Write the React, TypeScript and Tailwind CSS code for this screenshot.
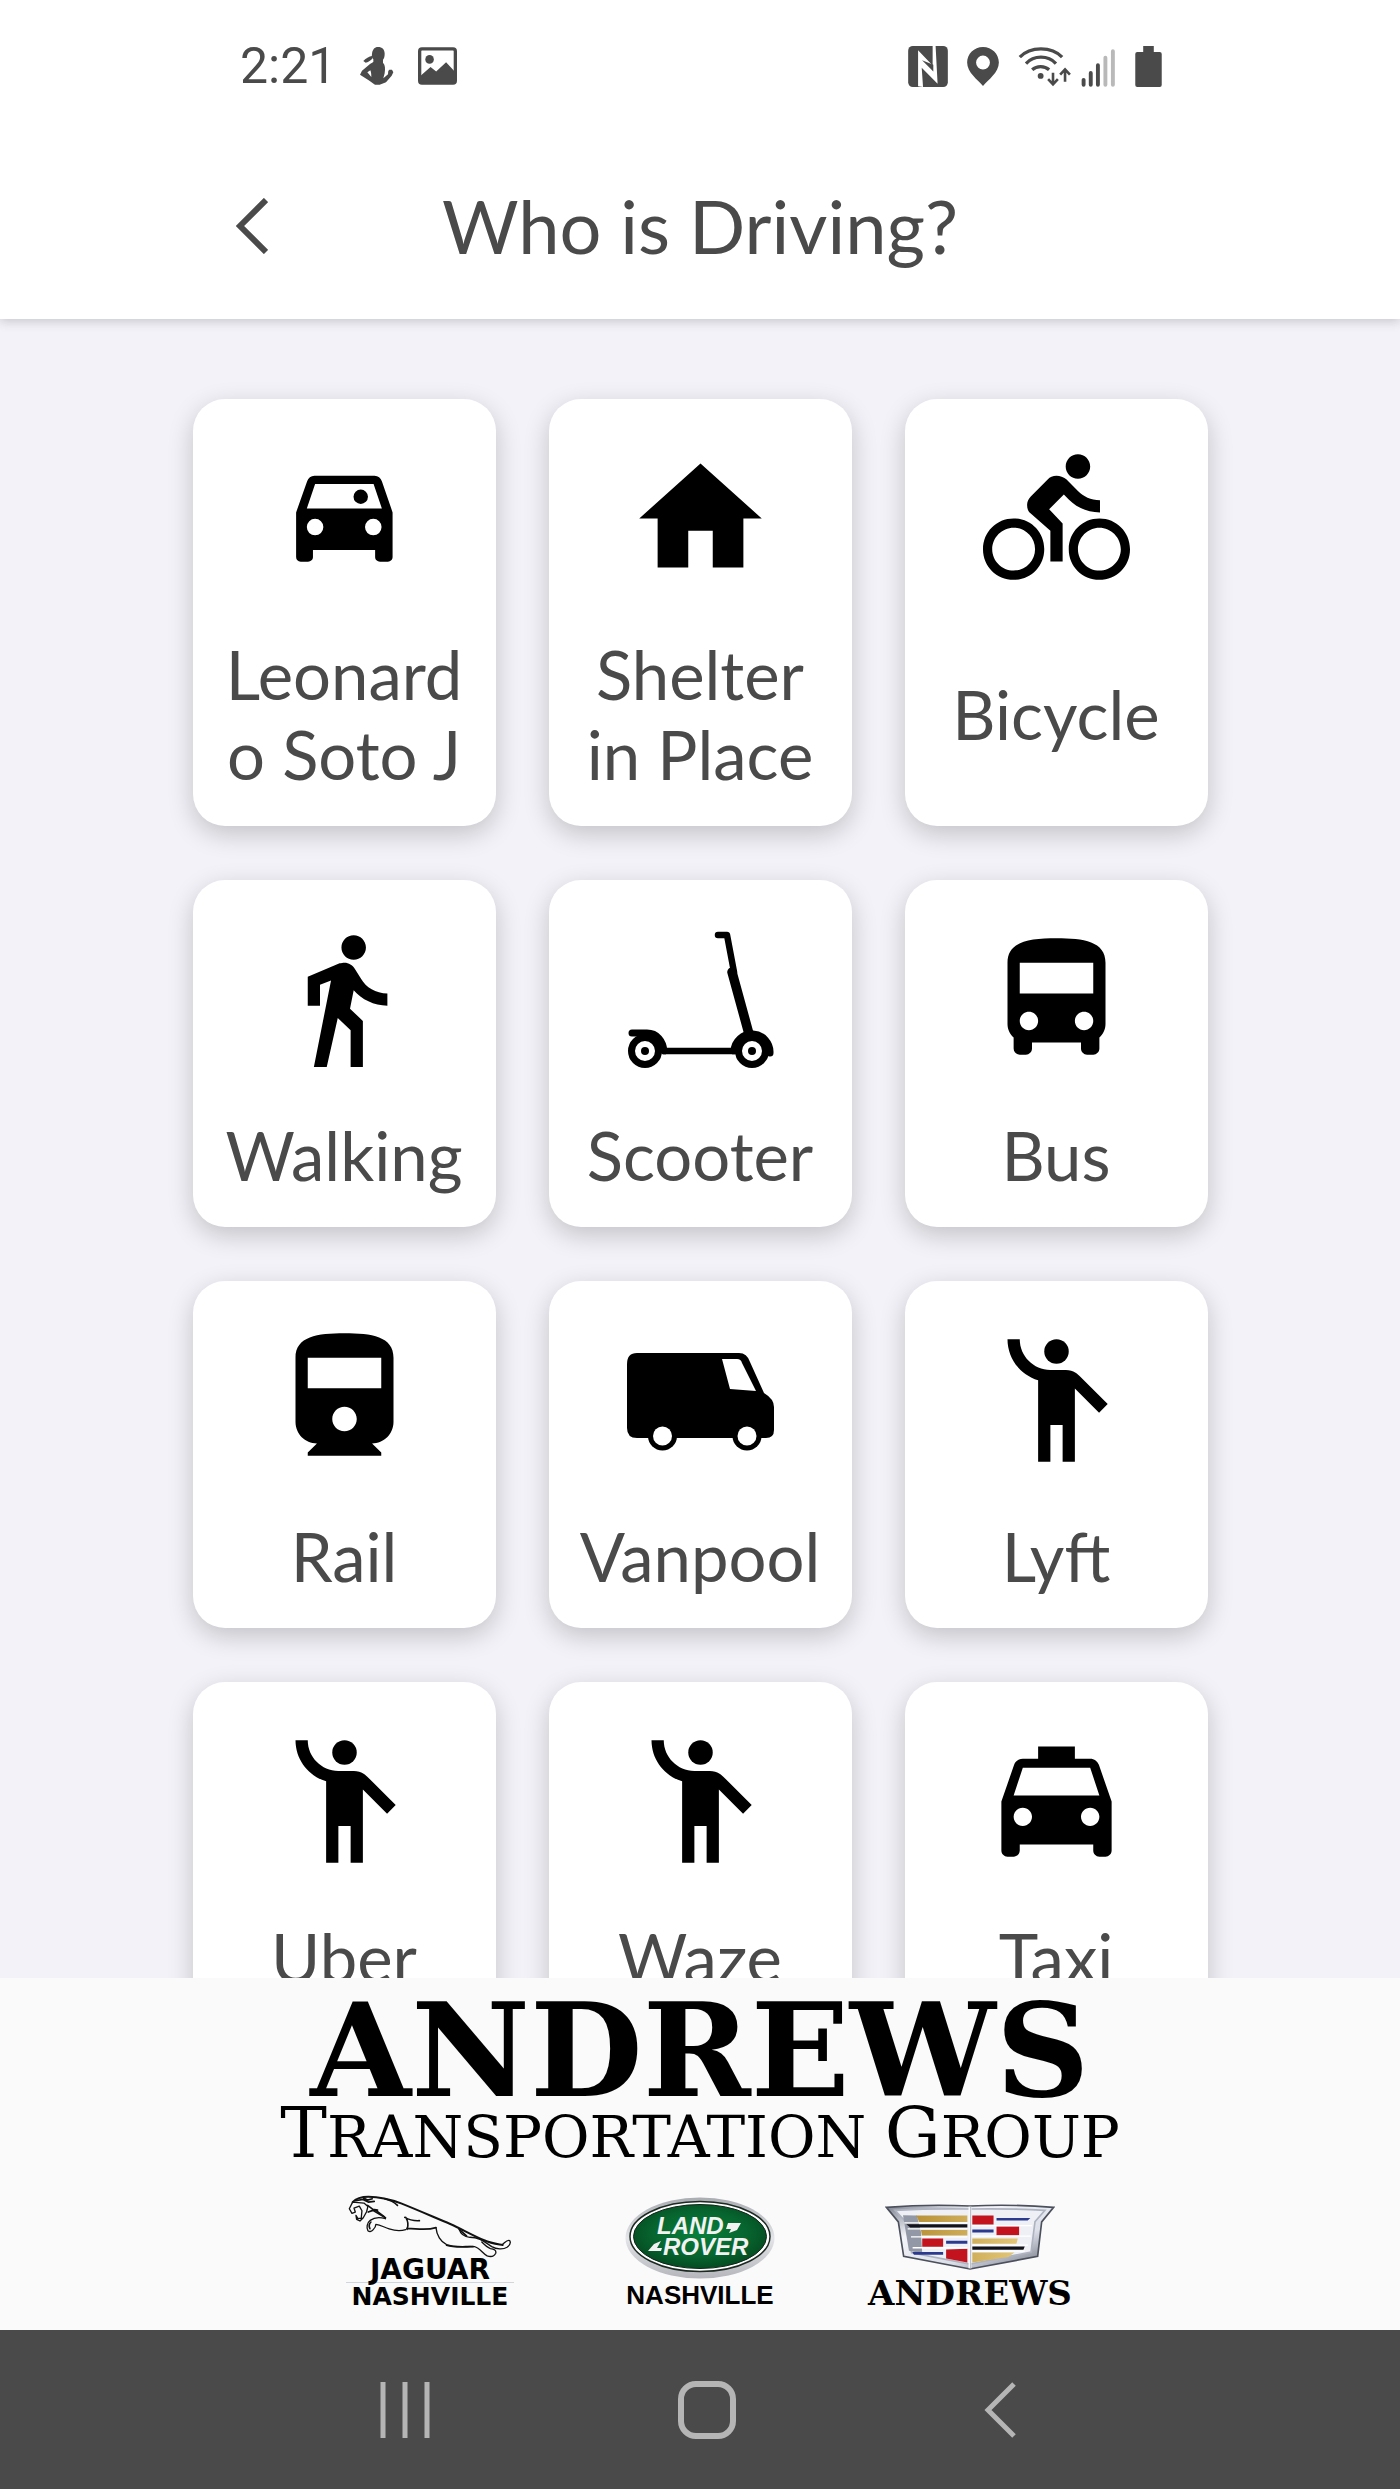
import type { ComponentType, ReactNode } from 'react'
import {
  MdDirectionsBike,
  MdDirectionsBus,
  MdDirectionsWalk,
  MdEmojiPeople,
  MdHome,
  MdLocalTaxi,
} from 'react-icons/md'

interface IconProps {
  className?: string
}

interface Mode {
  label: string
  Icon: ComponentType<IconProps>
}

function CarIcon({ className }: IconProps) {
  return (
    <svg viewBox="0 0 24 24" className={className} fill="currentColor" aria-hidden="true">
      <path
        fillRule="evenodd"
        d="M7.1 5h9.8c.6 0 1 .35 1.2.9L19.85 11v7.3c0 .45-.35.75-.75.75h-1.3c-.45 0-.8-.3-.8-.75v-1.15H6.85v1.15c0 .45-.35.75-.8.75h-1.2c-.45 0-.75-.3-.75-.75V11l1.8-5.1c.2-.55.6-.9 1.2-.9zM7.2 6.37 5.85 10.35H18.1L16.75 6.37zM7.2 12.05a1.35 1.35 0 1 0 0 2.7 1.35 1.35 0 0 0 0-2.7zM16.7 12.05a1.35 1.35 0 1 0 0 2.7 1.35 1.35 0 0 0 0-2.7z"
      />
      <circle cx="14.65" cy="8.45" r="1.18" />
    </svg>
  )
}

function RailIcon({ className }: IconProps) {
  return (
    <svg viewBox="0 0 24 24" className={className} fill="currentColor" aria-hidden="true">
      <path d="M4 15.5C4 17.43 5.57 19 7.5 19L6 20.5v.5h12v-.5L16.5 19c1.93 0 3.5-1.57 3.5-3.5V5c0-3.5-3.58-4-8-4s-8 .5-8 4v10.5zm8 1.5c-1.1 0-2-.9-2-2s.9-2 2-2 2 .9 2 2-.9 2-2 2zm6-7H6V5h12v5z" />
    </svg>
  )
}

function ScooterIcon({ className }: IconProps) {
  return (
    <svg viewBox="0 0 147 147" className={className} fill="none" stroke="currentColor" aria-hidden="true">
      <path d="M91 9h9l7 37" strokeWidth="6.5" strokeLinecap="round" strokeLinejoin="round" />
      <path d="M105 46l17 62" strokeWidth="9.5" strokeLinecap="round" />
      <path d="M38 125h68" strokeWidth="6.5" />
      <path d="M5 107h15c10 0 16 8 17 18" strokeWidth="7" strokeLinecap="round" />
      <path d="M107 125a18 18 0 0 1 36 2" strokeWidth="7" strokeLinecap="round" />
      <circle cx="18" cy="125" r="13.5" strokeWidth="7" />
      <circle cx="125" cy="125" r="13.5" strokeWidth="7" />
      <circle cx="18" cy="125" r="4" fill="currentColor" stroke="none" />
      <circle cx="125" cy="125" r="4" fill="currentColor" stroke="none" />
    </svg>
  )
}

function VanIcon({ className }: IconProps) {
  return (
    <svg viewBox="0 0 147 147" className={className} fill="currentColor" aria-hidden="true">
      <path d="M10 26h102q8 0 11 9l14 31q10 6 10 14v23q0 8-8 8H10q-10 0-10-10V37Q0 26 10 26z" />
      <circle cx="35.5" cy="109" r="14.5" />
      <circle cx="120" cy="109" r="14.5" />
      <circle cx="35.5" cy="109" r="9.5" fill="#fff" />
      <circle cx="120" cy="109" r="9.5" fill="#fff" />
      <path d="M95 32h15q4 0 5 4l14 28-26-2z" fill="#fff" />
    </svg>
  )
}

const modes: Mode[] = [
  { label: 'Leonardo Soto J', Icon: CarIcon },
  { label: 'Shelter in Place', Icon: MdHome },
  { label: 'Bicycle', Icon: MdDirectionsBike },
  { label: 'Walking', Icon: MdDirectionsWalk },
  { label: 'Scooter', Icon: ScooterIcon },
  { label: 'Bus', Icon: MdDirectionsBus },
  { label: 'Rail', Icon: RailIcon },
  { label: 'Vanpool', Icon: VanIcon },
  { label: 'Lyft', Icon: MdEmojiPeople },
  { label: 'Uber', Icon: MdEmojiPeople },
  { label: 'Waze', Icon: MdEmojiPeople },
  { label: 'Taxi', Icon: MdLocalTaxi },
]

function StatusBar() {
  return (
    <div className="flex h-[132px] items-center justify-between pr-[238px] pl-60 text-[#4a4a4a]">
      <div className="flex items-center gap-6">
        <span className="font-['Roboto',sans-serif] text-[50px] leading-[60px]">2:21</span>
        {/* 头像通知 */}
        <svg viewBox="0 0 102 114" className="h-[38px] w-[34px]" fill="currentColor" aria-hidden="true">
          <path d="M54 0c13 0 20 8 20 20 0 9-2 14-5 18v9c7 7 7 18 5 32l-4 15 14-12c1-6-1-10 4-14h8l4 8-5 10-17 20-19 7H45L26 100 0 83l6-12 24-20 10-6v-8c-5-5-5-11-4-16C37 8 44 0 54 0zM22 76l12 14c0-9-1-16-3-20z" fillRule="evenodd" />
          <path d="M36 27c-8 1-20 8-26 15l7 5c10-2 17-8 21-14z" />
        </svg>
        <svg viewBox="0 0 118 114" className="h-[38px] w-[39px]" fill="none" aria-hidden="true">
          <rect x="5" y="5" width="108" height="104" rx="7" stroke="currentColor" strokeWidth="10" />
          <circle cx="35" cy="37" r="13" fill="currentColor" />
          <path d="M6 88l32-28 17 14 30-28 28 30v32H6z" fill="currentColor" />
        </svg>
      </div>
      <div className="flex items-center gap-[19px]">
        <svg viewBox="0 0 120 124" className="h-[41px] w-[40px]" fill="currentColor" aria-hidden="true">
          <rect width="120" height="124" rx="14" />
          <path d="M30 122V13l44 46V0h9l6 114-48-48 4 58z" fill="#fff" />
          <path d="M42 43l34 34V57z" />
        </svg>
        <svg viewBox="0 0 96 118" className="h-[39px] w-[32px]" fill="currentColor" aria-hidden="true">
          <path fillRule="evenodd" d="M48 0c27 0 48 21 48 47 0 30-32 52-48 71C32 99 0 77 0 47 0 21 21 0 48 0zm0 26a21 21 0 1 0 0 42 21 21 0 0 0 0-42z" />
        </svg>
        {/* wifi 与信号 */}
        <svg viewBox="416 70 296 126" className="h-[41px] w-[98px]" fill="none" stroke="currentColor" strokeWidth="10" aria-hidden="true">
          <path d="M419 104c32-34 98-34 130 0M438 124c24-26 68-26 92 0M457 143c14-13 38-13 52 0" />
          <circle cx="483" cy="162" r="9" fill="currentColor" stroke="none" />
          <path d="M521 152v34m-15-14l15 16 15-16M558 180v-34m-15 12l15-16 15 16" strokeWidth="8" />
          <path d="M615 174v15M637 153v36M659 129v60" strokeWidth="12" strokeLinecap="round" />
          <path d="M682 106v83M705 86v103" stroke="#b9b9b9" strokeWidth="12" strokeLinecap="round" />
        </svg>
        <svg viewBox="0 0 80 124" className="h-[41px] w-[27px]" fill="currentColor" aria-hidden="true">
          <path d="M24 0h32v18h18q6 0 6 6v94q0 6-6 6H6q-6 0-6-6V24q0-6 6-6h18z" />
        </svg>
      </div>
    </div>
  )
}

function Header() {
  return (
    <header className="relative z-10 bg-white shadow-[0_2px_10px_rgba(60,60,70,0.25)]">
      <StatusBar />
      <div className="flex h-[187px] items-center px-56 text-[#4a4a4a]">
        <button type="button" aria-label="Back" className="w-16 px-3">
          <svg viewBox="0 0 32 56" className="h-14 w-8" fill="none" stroke="currentColor" strokeWidth="6" aria-hidden="true">
            <path d="M30 2L4 28l26 26" />
          </svg>
        </button>
        <h1 className="flex-1 text-center text-[74px] leading-[90px]">Who is Driving?</h1>
        <div className="w-16" />
      </div>
    </header>
  )
}

function ModeCard({ label, Icon }: Mode) {
  return (
    <button
      type="button"
      className="flex flex-col items-center rounded-[32px] bg-white px-7 pt-[46px] pb-8 shadow-[0_8px_26px_rgba(0,0,0,0.2)]"
    >
      <Icon className="size-[147px] shrink-0 text-black" />
      <span className="mt-[42px] flex w-full flex-1 items-center justify-center">
        <span className="w-full text-center text-[67px] leading-[80px] break-words text-[#4a4a4a]">{label}</span>
      </span>
    </button>
  )
}

function JaguarLogo() {
  return (
    <svg viewBox="126 84 500 192" className="h-[64px] w-[166px]" fill="none" stroke="#111" strokeWidth="4" strokeLinecap="round" strokeLinejoin="round" aria-hidden="true">
      <path d="M143 108c10-11 28-16 48-16 32 0 66 8 98 20 50 20 100 42 148 62 34 15 66 34 102 49 22 10 38 11 56 14" strokeWidth="6" />
      <path d="M143 108l-10 20 8 14 10-4-4-12 16-6 8 14-2 22-10 2-6-10 2 12 10 5 10-10 10-18 4-16-12-10-34-3z" />
      <path d="M152 104l22-4 16 8 18-2M176 96l12 6 14-4M188 118l16 12 14 2M190 138l14-5 38 22" strokeWidth="5" />
      <path d="M242 158c-14-4-34-4-46 5-10 8-12 22-7 31 6 5 12 2 16-3 5-5 8-11 8-16 14 1 24 9 40 14 16 5 36 6 50 2" />
      <path d="M198 168c-6 6-6 14-3 20M303 154c6 10 10 20 4 36M300 154c14 8 28 11 44 10M306 187c28 0 56 8 88-2" strokeWidth="5" />
      <path d="M394 185c2 22 14 43 32 51 26 10 60 4 84 6 16 4 24 20 38 28 12 4 22 0 26-8 2-8-4-13-16-14-10-4-18-12-26-20" />
      <path d="M464 190c4 14 14 22 32 24 30 0 44 14 66 28 14 8 34 10 46 2 8-6 12-14 8-20-8-4-14 6-22 12" />
      <path d="M240 98c16 4 28 10 38 20M426 238c20 7 50 6 80 4M464 190l22 20M212 132l26 20" strokeWidth="5" />
    </svg>
  )
}

function LandRoverLogo() {
  return (
    <svg viewBox="0 0 150 82" className="h-[82px] w-[150px]" role="img" aria-label="Land Rover">
      <defs>
        <linearGradient id="silver" x1="0" y1="0" x2="0" y2="1">
          <stop offset="0" stopColor="#a9acb1" />
          <stop offset="0.5" stopColor="#e4e5e9" />
          <stop offset="1" stopColor="#b4b6bb" />
        </linearGradient>
        <radialGradient id="green" cx="0.5" cy="0.45" r="0.6">
          <stop offset="0" stopColor="#08803c" />
          <stop offset="0.6" stopColor="#07642e" />
          <stop offset="1" stopColor="#04451f" />
        </radialGradient>
      </defs>
      <ellipse cx="75" cy="41" rx="74.5" ry="40.5" fill="url(#silver)" />
      <ellipse cx="75" cy="39.5" rx="70" ry="35" fill="#fff" stroke="#1c2a22" strokeWidth="1.5" />
      <ellipse cx="75" cy="39.5" rx="66.5" ry="32" fill="url(#green)" stroke="#10271a" strokeWidth="1" />
      <g fill="#f2f2f2" fontFamily="'Liberation Sans', sans-serif" fontWeight="700" fontStyle="italic" fontSize="24">
        <text x="32" y="37">LAND</text>
        <text x="38" y="58">ROVER</text>
        <path d="M103 26h13l-4 7-8 3 2-4h-5zM36 44l-7 3-6 7h13l1-3h-5z" />
      </g>
    </svg>
  )
}

function ShieldLogo() {
  return (
    <svg viewBox="132 76 512 202" className="h-[67px] w-[170px]" aria-hidden="true">
      <defs>
        <linearGradient id="chrome" x1="0" y1="0" x2="1" y2="1">
          <stop offset="0" stopColor="#7d8290" />
          <stop offset="0.3" stopColor="#f4f5fa" />
          <stop offset="0.65" stopColor="#dcdfe8" />
          <stop offset="1" stopColor="#5d6270" />
        </linearGradient>
        <linearGradient id="gold" x1="0" y1="0" x2="1" y2="0">
          <stop offset="0" stopColor="#b9923a" />
          <stop offset="1" stopColor="#e3c777" />
        </linearGradient>
      </defs>
      <path d="M136 86q126-10 252-4 126-6 252 4l-36 44-12 104-204 38-200-38-16-104z" fill="url(#chrome)" stroke="#4b505c" strokeWidth="5" />
      <path d="M162 95q110-6 226-4 116-2 226 4l-30 34-12 92-184 36-176-34-18-94z" fill="#eef0f5" stroke="#aeb3c0" strokeWidth="5" />
      <path d="M186 110l42 1 12 48 4 66-40-8z" fill="#9298a5" />
      <path d="M226 111h154v19H235zM240 154h140v17H243zM395 180h137l-4 16H395zM395 222h127l-18 14-109 16z" fill="url(#gold)" />
      <path d="M196 137h184v10H208zM395 204h158l-4 10H395z" fill="#12131a" />
      <path d="M395 111h64v27h-64zM468 144h68v26h-68zM244 180h63v25h-63zM316 213l64-2v41l-64-12z" fill="#c2131f" />
      <path d="M468 118h102l-8 8h-94zM395 153h64v9h-64zM316 187h64v9h-64zM214 221h93v8h-88z" fill="#2b3a8f" />
      <path d="M190 133h190M200 151h180M210 175h170M215 208h165M395 141h180M395 173h176M395 200h168M395 218h158" stroke="#fff" strokeWidth="4" />
      <path d="M388 84v186" stroke="#f7f8fb" strokeWidth="9" />
      <path d="M390 84v186" stroke="#8e93a0" strokeWidth="2" />
    </svg>
  )
}

function Brand({ children }: { children: ReactNode }) {
  return <div className="flex flex-col items-center justify-end">{children}</div>
}

function Sponsor() {
  return (
    <footer className="relative bg-[#fafafa] pt-6 pb-5 text-black">
      <div className="text-center font-['DejaVu_Serif',serif]">
        <p className="text-[130px] leading-[98px] font-bold">ANDREWS</p>
        <p className="text-[58px] leading-[66px] whitespace-nowrap">
          <span className="text-[70px]">T</span>RANSPORTATION <span className="text-[70px]">G</span>ROUP
        </p>
      </div>
      <div className="mx-auto mt-6 grid h-[116px] max-w-[810px] grid-cols-3">
        <Brand>
          <JaguarLogo />
          <p className="border-b border-gray-300 px-6 font-['DejaVu_Sans',sans-serif] text-[28px] leading-6 font-bold">
            JAGUAR
          </p>
          <p className="font-['DejaVu_Sans',sans-serif] text-[25px] leading-7 font-bold">NASHVILLE</p>
        </Brand>
        <Brand>
          <LandRoverLogo />
          <p className="font-['Liberation_Sans',sans-serif] text-[26px] leading-8 font-bold">NASHVILLE</p>
        </Brand>
        <Brand>
          <ShieldLogo />
          <p className="mt-1 font-['DejaVu_Serif',serif] text-[34px] leading-9 font-bold">ANDREWS</p>
        </Brand>
      </div>
    </footer>
  )
}

function NavBar() {
  return (
    <nav className="relative flex h-[159px] items-center justify-center gap-[248px] bg-[#4a4a4a] pr-1 text-[#b5b5b5]">
      <button type="button" aria-label="Recent apps">
        <svg viewBox="0 0 50 56" className="h-14 w-[50px]" fill="none" stroke="currentColor" strokeWidth="5" aria-hidden="true">
          <path d="M3 0v56M25 0v56M47 0v56" />
        </svg>
      </button>
      <button type="button" aria-label="Home">
        <svg viewBox="0 0 58 58" className="size-[58px]" fill="none" stroke="currentColor" strokeWidth="6" aria-hidden="true">
          <rect x="3" y="3" width="52" height="52" rx="15" />
        </svg>
      </button>
      <button type="button" aria-label="Go back">
        <svg viewBox="0 0 32 56" className="h-14 w-8" fill="none" stroke="currentColor" strokeWidth="5" aria-hidden="true">
          <path d="M30 2L4 28l26 26" />
        </svg>
      </button>
    </nav>
  )
}

export default function App() {
  return (
    <div className="flex h-screen flex-col bg-[#f3f2f8] font-['Lato',sans-serif]">
      <Header />
      <main className="min-h-0 flex-1 overflow-y-auto [scrollbar-width:none]">
        <div className="mx-auto grid max-w-[1015px] grid-cols-3 gap-x-[53px] gap-y-[54px] pt-20 pb-[54px]">
          {modes.map((mode) => (
            <ModeCard key={mode.label} {...mode} />
          ))}
        </div>
      </main>
      <Sponsor />
      <NavBar />
    </div>
  )
}
